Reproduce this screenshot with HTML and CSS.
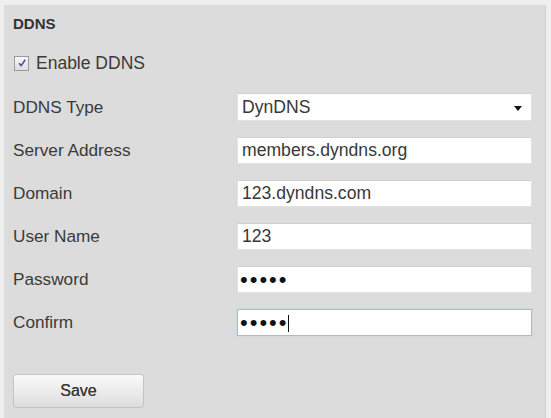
FILE: index.html
```html
<!DOCTYPE html>
<html lang="en">
<head>
<meta charset="utf-8">
<title>DDNS</title>
<link rel="stylesheet" href="styles.css">
</head>
<body>
<div class="panel">
  <h2 class="title">DDNS</h2>
  <label class="enable">
    <span class="check">
      <svg viewBox="0 0 10 10" width="10" height="10"><path d="M2 5.2 L4.2 7.6 L8.2 1.8" fill="none" stroke="#3b4f9a" stroke-width="1.5"/></svg>
    </span>
    Enable DDNS
  </label>
  <form class="fields">
    <label class="name">DDNS Type</label>
    <div class="select">DynDNS</div>

    <label class="name">Server Address</label>
    <input class="box" type="text" value="members.dyndns.org">

    <label class="name">Domain</label>
    <input class="box" type="text" value="123.dyndns.com">

    <label class="name">User Name</label>
    <input class="box" type="text" value="123">

    <label class="name">Password</label>
    <input class="box" type="password" value="12345">

    <label class="name">Confirm</label>
    <input class="box focus" type="password" value="12345">
  </form>
  <button class="save" type="button">Save</button>
</div>
</body>
</html>
```
FILE: styles.css
```css
html, body {
  margin: 0;
  padding: 0;
}

body {
  width: 551px;
  height: 418px;
  overflow: hidden;
  background: #efefef;
  font-family: "Liberation Sans", Arial, sans-serif;
  color: #3a3a3a;
}

.panel {
  margin: 5px 5px 0 4px;
  height: 413px;
  box-sizing: border-box;
  padding: 0 9px;
  background: #dcdcdc;
  border-right: 1px solid #d2d2d2;
  display: flex;
  flex-direction: column;
  align-items: flex-start;
}

.title {
  margin: 10px 0 0;
  font-size: 15px;
  line-height: 18px;
  font-weight: bold;
  color: #333;
}

.enable {
  margin-top: 20px;
  display: flex;
  align-items: center;
  gap: 7px;
  font-size: 17.5px;
  line-height: 20px;
  color: #3a3a3a;
}

.check {
  width: 15px;
  height: 15px;
  margin-left: 1px;
  box-sizing: border-box;
  border: 1px solid #9a9a9a;
  background: linear-gradient(#f6f6f6, #dedede);
  display: flex;
  align-items: center;
  justify-content: center;
}

.fields {
  margin: 20px 0 0;
  width: 519px;
  display: grid;
  grid-template-columns: 224px 1fr;
  row-gap: 16px;
  align-items: center;
}

.name {
  font-size: 17.2px;
  color: #3a3a3a;
}

.select,
.box {
  height: 27px;
  box-sizing: border-box;
  margin: 0;
  padding: 0 4px;
  border: 1px solid #e2e2e2;
  border-top-color: #cfcfcf;
  background: #fff;
  font-family: "Liberation Sans", Arial, sans-serif;
  font-size: 17.6px;
  color: #383838;
  outline: none;
}

.select {
  position: relative;
  display: flex;
  align-items: center;
  height: 28px;
}

.select::after {
  content: "";
  position: absolute;
  right: 9px;
  top: 12px;
  border-left: 4px solid transparent;
  border-right: 4px solid transparent;
  border-top: 5px solid #111;
}

.box {
  width: 100%;
}

.box[type="password"] {
  padding-left: 2px;
  color: #111;
  font-size: 22px;
  letter-spacing: 2px;
}

/* focused field with its text caret after the last character */
.focus {
  border: 1px solid #9fbcd8;
  box-shadow: 0 0 2px #b9d3ea;
  background: #fff linear-gradient(#111, #111) no-repeat 50px 5px / 1px 17px;
}

.save {
  margin-top: 38px;
  width: 131px;
  height: 34px;
  border: 1px solid #c3c3c3;
  border-radius: 3px;
  background: linear-gradient(#fafafa, #e9e9e9 60%, #dcdcdc);
  font-family: "Liberation Sans", Arial, sans-serif;
  font-size: 16px;
  color: #3a3a3a;
  text-shadow: 0 0 0.5px #3a3a3a;
}
```
